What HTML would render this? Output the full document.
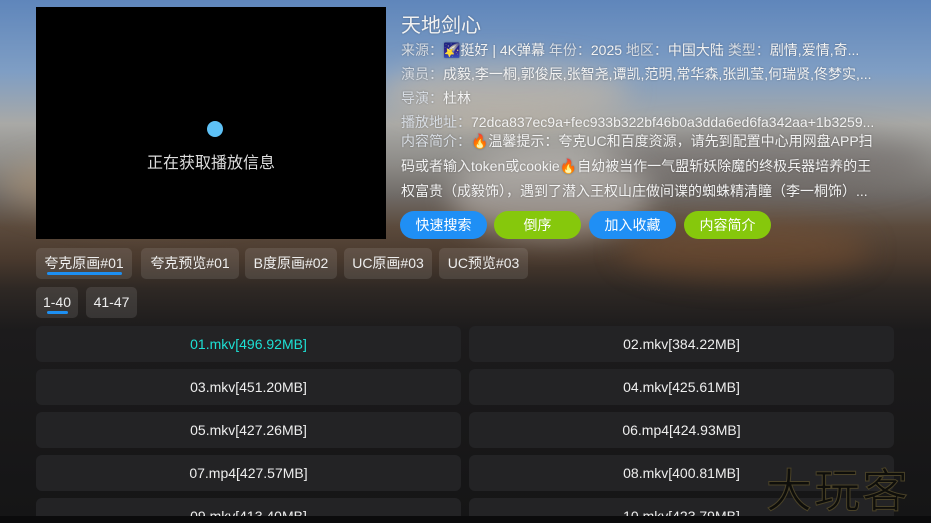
<!DOCTYPE html>
<html><head><meta charset="utf-8"><style>
*{margin:0;padding:0;box-sizing:border-box}
body{width:931px;height:523px;overflow:hidden;position:relative;font-family:"Liberation Sans","Noto Sans CJK SC",sans-serif;background:#0b0b0c;color:#fff}
#bg{position:absolute;left:0;top:0;width:931px;height:516px;overflow:hidden;background:linear-gradient(180deg,#5f86bb 0%,#7f9ec4 14%,#a9a9a6 24%,#8c8a86 32%,#6f6a66 38%,#5b4a3c 44%,#4a3a2e 50%,#2e2824 56%,#1c1b1c 64%,#151516 100%)}
.cl{position:absolute;border-radius:50%;filter:blur(14px)}
.video{position:absolute;left:36px;top:7px;width:350px;height:232px;background:#000}
.dot{position:absolute;left:171px;top:114px;width:16px;height:16px;border-radius:50%;background:#5ec1f6}
.vt{position:absolute;left:0;width:350px;top:142px;text-align:center;font-size:16px;color:#ddd}
.info{position:absolute;left:401px;font-size:14px;color:#f2f2f2;white-space:nowrap;text-shadow:0 0 2px rgba(0,0,0,.3)}
.lab{color:#d8dde4}
.btn{position:absolute;top:211px;height:28px;border-radius:14px;font-size:14px;text-align:center;line-height:28px;color:#fff}
.b{background:#1f8ff5}.g{background:#86c80c}
.tab{position:absolute;height:31px;border-radius:5px;background:rgba(255,255,255,.1);font-size:14px;line-height:30px;text-align:center;color:#eee}
.ul{position:absolute;height:3px;border-radius:2px;background:#1d8ff2}
.it{position:absolute;width:425px;height:36px;border-radius:6px;background:#232325;font-size:14px;line-height:36px;text-align:center;color:#eee}
</style></head><body>
<div id="bg">
<div class="cl" style="left:380px;top:60px;width:250px;height:60px;background:rgba(240,200,150,.35)"></div>
<div class="cl" style="left:0px;top:150px;width:300px;height:70px;background:rgba(210,170,120,.35)"></div>
<div class="cl" style="left:600px;top:130px;width:330px;height:60px;background:rgba(90,80,80,.35)"></div>
<div class="cl" style="left:450px;top:150px;width:200px;height:90px;background:rgba(230,225,220,.4)"></div>
<div class="cl" style="left:620px;top:220px;width:250px;height:60px;background:rgba(140,90,50,.35)"></div>
<div class="it" style="left:36px;top:326px;color:#1de0d4">01.mkv[496.92MB]</div>
<div class="it" style="left:469px;top:326px">02.mkv[384.22MB]</div>
<div class="it" style="left:36px;top:369px">03.mkv[451.20MB]</div>
<div class="it" style="left:469px;top:369px">04.mkv[425.61MB]</div>
<div class="it" style="left:36px;top:412px">05.mkv[427.26MB]</div>
<div class="it" style="left:469px;top:412px">06.mp4[424.93MB]</div>
<div class="it" style="left:36px;top:455px">07.mp4[427.57MB]</div>
<div class="it" style="left:469px;top:455px">08.mkv[400.81MB]</div>
<div class="it" style="left:36px;top:498px">09.mkv[413.40MB]</div>
<div class="it" style="left:469px;top:498px">10.mkv[423.79MB]</div>
<div style="position:absolute;left:766px;top:455px;font-size:46px;color:#0e0e0b;-webkit-text-stroke:1px #4a4228;letter-spacing:2px;font-family:'Noto Sans CJK SC',sans-serif">大玩客</div>
</div>
<div class="video"><div class="dot"></div><div class="vt">正在获取播放信息</div></div>
<div class="info" style="top:9px;font-size:20px">天地剑心</div>
<div class="info" style="top:40px"><span class="lab">来源：</span>🌠挺好 | 4K弹幕 <span class="lab">年份：</span>2025 <span class="lab">地区：</span>中国大陆 <span class="lab">类型：</span>剧情,爱情,奇...</div>
<div class="info" style="top:64px"><span class="lab">演员：</span>成毅,李一桐,郭俊辰,张智尧,谭凯,范明,常华森,张凯莹,何瑞贤,佟梦实,...</div>
<div class="info" style="top:88px"><span class="lab">导演：</span>杜林</div>
<div class="info" style="top:112px"><span class="lab">播放地址：</span>72dca837ec9a+fec933b322bf46b0a3dda6ed6fa342aa+1b3259...</div>
<div class="info" style="top:129px;line-height:25px"><span class="lab">内容简介：</span>🔥温馨提示：夸克UC和百度资源，请先到配置中心用网盘APP扫<br>码或者输入token或cookie🔥自幼被当作一气盟斩妖除魔的终极兵器培养的王<br>权富贵（成毅饰），遇到了潜入王权山庄做间谍的蜘蛛精清瞳（李一桐饰）...</div>
<div class="btn b" style="left:400px;width:87px">快速搜索</div>
<div class="btn g" style="left:494px;width:87px">倒序</div>
<div class="btn b" style="left:589px;width:87px">加入收藏</div>
<div class="btn g" style="left:684px;width:87px">内容简介</div>
<div class="tab" style="left:36px;top:248px;width:96px">夸克原画#01</div>
<div class="ul" style="left:47px;top:272px;width:75px"></div>
<div class="tab" style="left:141px;top:248px;width:98px">夸克预览#01</div>
<div class="tab" style="left:245px;top:248px;width:92px">B度原画#02</div>
<div class="tab" style="left:344px;top:248px;width:88px">UC原画#03</div>
<div class="tab" style="left:439px;top:248px;width:89px">UC预览#03</div>
<div class="tab" style="left:36px;top:287px;width:42px">1-40</div>
<div class="ul" style="left:47px;top:311px;width:21px"></div>
<div class="tab" style="left:86px;top:287px;width:51px">41-47</div>
</body></html>
